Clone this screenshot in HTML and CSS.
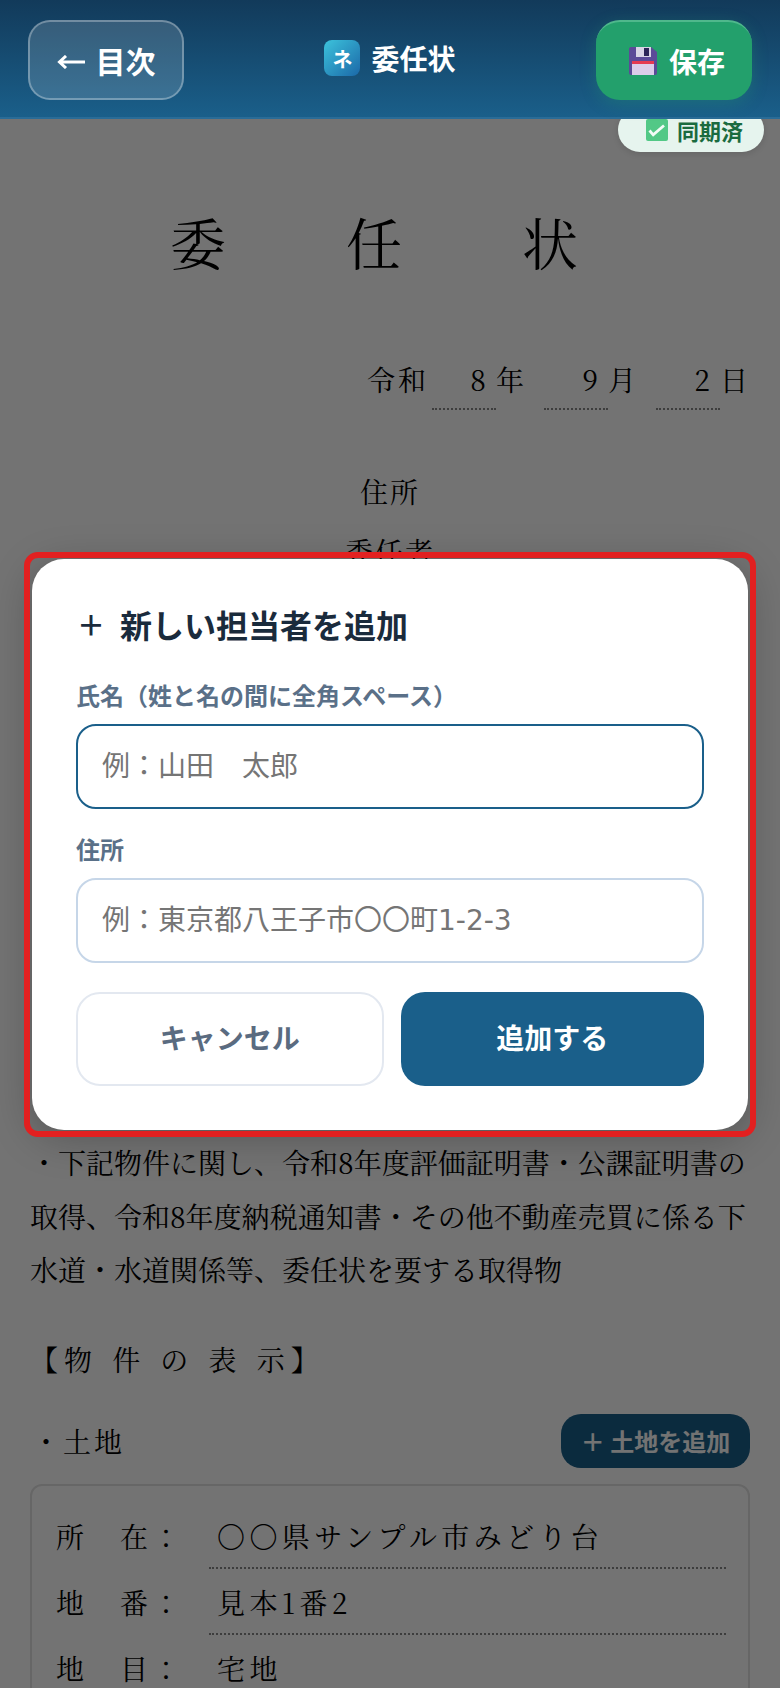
FILE: index.html
```html
<!DOCTYPE html>
<html lang="ja">
<head>
    <meta charset="UTF-8">
    <title>委任状</title>
    <link rel="stylesheet" href="styles.css">
</head>
<body>
    <div class="page">
        <header class="topbar">
            <button class="back-btn">
                <svg class="back-arrow" viewBox="0 0 28 14">
                    <path d="M2 7H28M9 1L2.5 7L9 13" fill="none" stroke="#fff" stroke-width="3"/>
                </svg>
                <span>目次</span>
            </button>
            <div class="topbar-title">
                <span class="app-icon">ネ</span>
                <span>委任状</span>
            </div>
            <button class="save-btn">
                <svg class="save-icon" viewBox="0 0 28 28">
                    <path d="M2 0H22L28 5V26a2 2 0 0 1-2 2H2a2 2 0 0 1-2-2V2a2 2 0 0 1 2-2Z" fill="#5b4a98"/>
                    <rect x="7" y="0" width="15" height="10" fill="#d9d5e6"/>
                    <rect x="15" y="1" width="5" height="8" fill="#2c2558"/>
                    <rect x="3" y="14" width="22" height="14" fill="#dccdea"/>
                    <rect x="3" y="14" width="22" height="3" fill="#e63a52"/>
                </svg>
                <span>保存</span>
            </button>
        </header>

        <div class="sync-badge">
            <svg class="sync-icon" viewBox="0 0 22 22">
                <rect width="22" height="22" rx="2" fill="#52c886"/>
                <path d="M3.5 11.5L7.2 15.8L18 6.5" fill="none" stroke="#f2fbf6" stroke-width="2.8"/>
            </svg>
            <span>同期済</span>
        </div>

        <main class="doc">
            <h1 class="doc-title">委　任　状</h1>
            <div class="date-row">
                <span class="date-era">令和</span>
                <span class="date-field">8</span><span class="date-unit">年</span>
                <span class="date-field">9</span><span class="date-unit">月</span>
                <span class="date-field">2</span><span class="date-unit">日</span>
            </div>
            <p class="party-line party-first">住所</p>
            <p class="party-line">委任者</p>
            <div class="doc-hidden"></div>
            <p class="doc-text">・下記物件に関し、令和8年度評価証明書・公課証明書の取得、令和8年度納税通知書・その他不動産売買に係る下水道・水道関係等、委任状を要する取得物</p>
            <h2 class="section-title">【物 件 の 表 示】</h2>
            <div class="land-head">
                <span>・土地</span>
                <button class="add-land">＋ 土地を追加</button>
            </div>
            <div class="land-box">
                <div class="land-row"><span class="land-label">所　在：</span><span class="land-value">〇〇県サンプル市みどり台</span></div>
                <div class="land-row"><span class="land-label">地　番：</span><span class="land-value">見本1番2</span></div>
                <div class="land-row"><span class="land-label">地　目：</span><span class="land-value">宅地</span></div>
            </div>
        </main>

        <div class="overlay">
            <div class="modal">
                <h3 class="modal-title"><span class="modal-plus">＋</span>新しい担当者を追加</h3>
                <label class="field-label">氏名（姓と名の間に全角スペース）</label>
                <input class="field field-focus" type="text" placeholder="例：山田　太郎">
                <label class="field-label field-label-2">住所</label>
                <input class="field" type="text" placeholder="例：東京都八王子市〇〇町1-2-3">
                <div class="modal-actions">
                    <button class="btn-cancel">キャンセル</button>
                    <button class="btn-add">追加する</button>
                </div>
            </div>
        </div>
    </div>
</body>
</html>
```

FILE: styles.css
```css
* {
    box-sizing: border-box;
}
body {
    margin: 0;
    background: #fff;
    font-family: Inter, "Noto Sans CJK JP", sans-serif;
}
button {
    font-family: inherit;
    cursor: pointer;
}
.page {
    position: relative;
    height: 1688px;
    overflow: hidden;
}

/* top bar */
.topbar {
    position: relative;
    z-index: 3;
    height: 119px;
    padding: 20px 28px 0;
    display: flex;
    justify-content: space-between;
    align-items: flex-start;
    background: linear-gradient(180deg, #123a5a, #1a5f8a);
    border-bottom: 2px solid #2a6c97;
}
.back-btn {
    width: 156px;
    height: 80px;
    border: 2px solid rgba(255,255,255,.3);
    border-radius: 22px;
    background: rgba(255,255,255,.15);
    color: #fff;
    font-size: 30px;
    font-weight: 700;
    white-space: nowrap;
    padding: 0;
    display: flex;
    align-items: center;
    justify-content: center;
    gap: 11px;
}
.back-arrow {
    width: 28px;
    height: 14px;
    margin-top: 3px;
}
.topbar-title {
    display: flex;
    align-items: center;
    gap: 11px;
    height: 76px;
    color: #fff;
    font-size: 28px;
    font-weight: 700;
}
.app-icon {
    width: 36px;
    height: 36px;
    border-radius: 8px;
    background: linear-gradient(135deg, #3cc3dc, #1b68a8);
    font-size: 20px;
    display: flex;
    align-items: center;
    justify-content: center;
}
.save-btn {
    width: 156px;
    height: 80px;
    border: 0;
    border-top: 2px solid #4fb88c;
    border-radius: 24px;
    background: #23a06c;
    box-shadow: 0 4px 16px rgba(35,160,108,.3);
    color: #fff;
    font-size: 28px;
    font-weight: 700;
    display: flex;
    align-items: center;
    justify-content: center;
    gap: 12px;
    padding: 0 0 0 6px;
}
.save-icon {
    width: 28px;
    height: 28px;
}
.sync-badge {
    position: absolute;
    z-index: 2;
    top: 108px;
    right: 16px;
    width: 146px;
    height: 44px;
    padding-left: 7px;
    border-radius: 24px;
    background: #e6f4ee;
    box-shadow: 0 2px 6px rgba(0,0,0,.12);
    color: #1a6b3f;
    font-size: 22px;
    font-weight: 700;
    display: flex;
    align-items: center;
    justify-content: center;
    gap: 9px;
}
.sync-icon {
    width: 22px;
    height: 22px;
}

/* document behind the dialog */
.doc {
    padding: 0 30px;
    color: #000;
    font-family: "Noto Serif CJK JP", "Noto Sans CJK JP", serif;
    font-size: 28px;
}
.doc-title {
    margin: 80px 0 0;
    font-size: 56px;
    font-weight: 400;
    letter-spacing: 32px;
    line-height: 84px;
    text-align: center;
}
.date-row {
    margin-top: 75px;
    display: flex;
    justify-content: flex-end;
    align-items: flex-start;
    line-height: 42px;
    padding-right: 2px;
}
.date-era {
    letter-spacing: 3px;
}
.date-field {
    width: 64px;
    height: 52px;
    margin-left: 3px;
    padding-right: 10px;
    text-align: right;
    border-bottom: 2px dotted #888;
}
.date-unit {
    margin-right: 17px;
}
.date-unit:last-child {
    margin-right: 0;
}
.party-line {
    margin: 0;
    height: 60px;
    line-height: 60px;
    letter-spacing: 2px;
    text-align: center;
}
.party-first {
    margin-top: 51px;
}
.doc-hidden {
    height: 555px;
}
.doc-text {
    margin: 0;
    line-height: 53.5px;
}
.section-title {
    margin: 40px 0 0;
    font-size: 28px;
    font-weight: 400;
    letter-spacing: 6px;
    word-spacing: 1px;
    line-height: 44px;
}
.land-head {
    margin-top: 33px;
    padding-left: 2px;
    display: flex;
    justify-content: space-between;
    align-items: center;
    letter-spacing: 3px;
}
.add-land {
    width: 189px;
    height: 54px;
    border: 0;
    border-radius: 20px;
    background: #1a5f8a;
    color: #fff;
    font-family: Inter, "Noto Sans CJK JP", sans-serif;
    font-size: 24px;
    font-weight: 700;
    letter-spacing: 0;
    padding: 0;
    white-space: nowrap;
}
.land-box {
    margin-top: 16px;
    padding: 17px 22px 18px 24px;
    border: 2px solid #e2e2e2;
    border-radius: 12px;
}
.land-row {
    display: flex;
    height: 66px;
    align-items: center;
}
.land-label {
    width: 153px;
    flex: none;
    letter-spacing: 4px;
}
.land-value {
    flex: 1;
    height: 66px;
    line-height: 66px;
    padding-left: 8px;
    letter-spacing: 4.4px;
    border-bottom: 2px dotted #888;
}

/* dialog */
.overlay {
    position: absolute;
    inset: 0;
    z-index: 1;
    background: rgba(0,0,0,.55);
    display: flex;
    align-items: center;
    justify-content: center;
}
.modal {
    position: relative;
    width: 716px;
    height: 571px;
    padding: 42px 44px 44px;
    background: #fff;
    border-radius: 32px;
    box-shadow: 0 8px 40px rgba(0,0,0,.25);
}
.modal::after {
    content: "";
    position: absolute;
    top: -7px;
    left: -8px;
    right: -8px;
    bottom: -7px;
    border: 6px solid #e22020;
    border-radius: 14px;
}
.modal-title {
    margin: 0;
    display: flex;
    align-items: center;
    height: 46px;
    color: #1a2b3c;
    font-size: 32px;
    font-weight: 700;
}
.modal-plus {
    width: 43px;
    margin-left: 1px;
    font-size: 28px;
}
.field-label {
    display: block;
    margin-top: 33px;
    margin-bottom: -2px;
    height: 34px;
    line-height: 34px;
    color: #5a7088;
    font-size: 24px;
    font-weight: 700;
}
.field-label-2 {
    margin-top: 25px;
}
.field {
    display: block;
    width: 100%;
    height: 85px;
    margin-top: 12px;
    padding: 0 24px;
    border: 2px solid #c6d6e8;
    border-radius: 20px;
    background: #fff;
    color: #1a2b3c;
    font-family: "DejaVu Sans", "Noto Sans CJK JP", sans-serif;
    font-size: 28px;
    outline: none;
}
.field::placeholder {
    color: #757575;
    opacity: 1;
}
.field-focus {
    border-color: #1a5f8a;
}
.modal-actions {
    margin-top: 29px;
    display: flex;
    gap: 17px;
}
.btn-cancel,
.btn-add {
    flex: 1;
    height: 94px;
    border-radius: 24px;
    font-size: 28px;
    font-weight: 700;
    padding: 0 0 4px;
}
.btn-cancel {
    border: 2px solid #e3e8f0;
    background: #fff;
    color: #5a6b80;
}
.btn-add {
    border: 0;
    background: #1a5f8a;
    color: #fff;
}
```
